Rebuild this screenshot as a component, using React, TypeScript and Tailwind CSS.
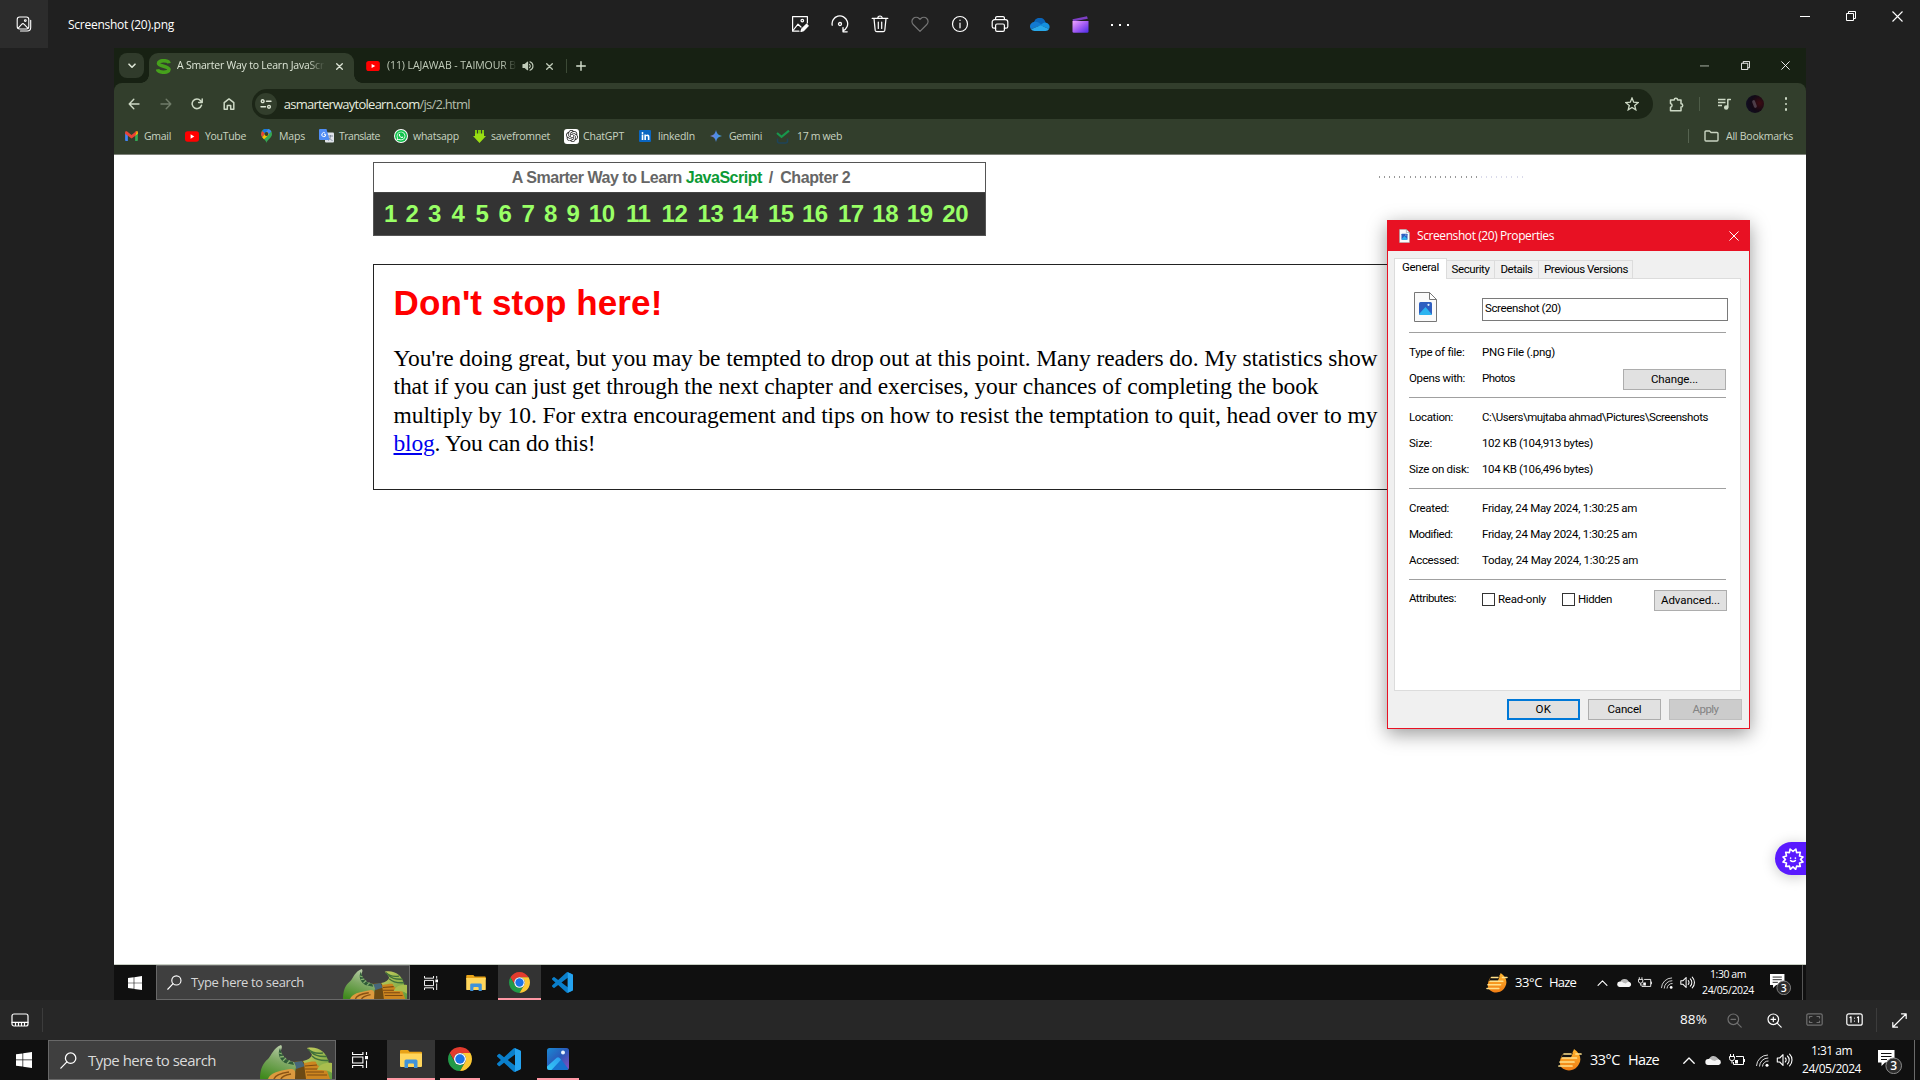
import React, { useLayoutEffect, useRef, useState } from "react";
import { SiOpenai } from "react-icons/si";
import { FaWhatsapp, FaLinkedinIn } from "react-icons/fa";

/* Spreads one line of text over the width of its box by adjusting tracking. */
function Fit({ className = "", children }: { className?: string; children: React.ReactNode }) {
  const box = useRef<HTMLSpanElement>(null);
  const inner = useRef<HTMLSpanElement>(null);
  const [tracking, setTracking] = useState(0);
  useLayoutEffect(() => {
    if (!box.current || !inner.current) return;
    const n = (inner.current.textContent || "").length;
    const natural = inner.current.getBoundingClientRect().width;
    setTracking((box.current.getBoundingClientRect().width - natural) / n);
  }, []);
  return (
    <span ref={box} className={"block shrink-0 whitespace-pre " + className}>
      <span ref={inner} style={{ letterSpacing: tracking + "px" }}>
        {children}
      </span>
    </span>
  );
}

type IconProps = { className?: string };
function Line({
  className = "size-5",
  box = "0 0 20 20",
  sw = 1.2,
  children,
}: IconProps & { box?: string; sw?: number; children: React.ReactNode }) {
  return (
    <svg
      viewBox={box}
      className={"shrink-0 " + className}
      fill="none"
      stroke="currentColor"
      strokeWidth={sw}
      strokeLinecap="round"
      strokeLinejoin="round"
    >
      {children}
    </svg>
  );
}

const Minimize = ({ className = "size-[10px]" }: IconProps) => (
  <Line className={className} box="0 0 10 10" sw={1}>
    <path d="M0 5.5h10" strokeLinecap="butt" />
  </Line>
);
const Restore = ({ className = "size-[10px]" }: IconProps) => (
  <svg viewBox="0 0 10 10" className={"shrink-0 " + className} fill="none" stroke="currentColor">
    <path d="M.5 2.5h7v7h-7zM2.5 2.5v-2h7v7h-2" />
  </svg>
);
const Close = ({ className = "size-[11px]" }: IconProps) => (
  <svg viewBox="0 0 11 11" className={"shrink-0 " + className} fill="none" stroke="currentColor" strokeWidth="1.1">
    <path d="M.5.5l10 10M10.5.5l-10 10" />
  </svg>
);

const YouTube = ({ className = "w-[15px] h-[11px]" }: IconProps) => (
  <svg viewBox="0 0 15 11" className={"shrink-0 " + className}>
    <rect width="15" height="11" rx="2.8" fill="#f00" />
    <path d="M6 3.2v4.6l4-2.3z" fill="#fff" />
  </svg>
);

/* ---------- Photos title bar ---------- */

function PhotosTitleBar() {
  return (
    <header className="flex h-12 shrink-0 bg-[#202020] text-white">
      <div className="flex w-12 items-center justify-center bg-[#2c2c2c]">
        <Line className="size-4" box="0 0 16 16" sw={1.1}>
          <rect x="1.2" y="1" width="11.6" height="12" rx="2.4" />
          <path d="M4.5 15h6.8a3.4 3.4 0 0 0 3.4-3.4V4.2M2.2 12.2l3.7-4.1a1.4 1.4 0 0 1 2.1 0l3.8 4.1" />
          <circle cx="9.3" cy="4.6" r=".9" />
        </Line>
      </div>
      <div className="flex w-[732px] items-center pt-px pl-[20px] text-[12px]">
        <Fit className="w-[106px]">Screenshot (20).png</Fit>
      </div>
      <div className="flex [&>div]:flex [&>div]:w-10 [&>div]:items-center [&>div]:justify-center">
        <div>
          <Line className="size-[18px]" box="0 0 18 18">
            <path d="M8 16.2H1.6V1.6h14.8V8" />
            <path d="M2 15.5l5-6.3 3 2.8" />
            <circle cx="11.3" cy="5.6" r="1.3" />
            <path d="M15.6 9.2l1.6 1.6-4.6 4.8-2.6.9.8-2.6z" fill="currentColor" />
          </Line>
        </div>
        <div>
          <Line className="size-[18px]" box="0 0 18 18" sw={1.3}>
            <path d="M1.2 10.2A7.8 7.8 0 1 1 12 15.9M12 12.6v4.2h4.2" />
            <circle cx="9" cy="9" r="1.5" />
          </Line>
        </div>
        <div>
          <Line className="size-[18px]" box="0 0 18 18">
            <path d="M1.2 3.4h15.6M6.8 3.2a2.2 2.2 0 0 1 4.4 0M3 3.6l1.2 11.8a1.6 1.6 0 0 0 1.6 1.3h6.4a1.6 1.6 0 0 0 1.6-1.3L15 3.6M7.3 7v6.4M10.7 7v6.4" />
          </Line>
        </div>
        <div className="text-[#757575]">
          <Line className="size-[18px]" box="0 0 18 18">
            <path d="M9 16.3L2.2 9.5a4.2 4.2 0 0 1 0-6 4.1 4.1 0 0 1 5.9 0l.9.9.9-.9a4.1 4.1 0 0 1 5.9 0 4.2 4.2 0 0 1 0 6z" />
          </Line>
        </div>
        <div>
          <Line className="size-[18px]" box="0 0 18 18">
            <circle cx="9" cy="9" r="7.5" />
            <path d="M9 8v4.8M9 5.2v.3" />
          </Line>
        </div>
        <div>
          <Line className="size-[18px]" box="0 0 18 18">
            <path d="M4.6 13.2H3a1.8 1.8 0 0 1-1.8-1.8V7A2.4 2.4 0 0 1 3.6 4.6h10.8A2.4 2.4 0 0 1 16.8 7v4.4a1.8 1.8 0 0 1-1.8 1.8h-1.6M4.6 4.4V3a1.4 1.4 0 0 1 1.4-1.4h6A1.4 1.4 0 0 1 13.4 3v1.4" />
            <rect x="4.6" y="9" width="8.8" height="7.3" rx="1.4" />
          </Line>
        </div>
        <div>
          <svg viewBox="0 0 20 13" className="mt-px h-[13px] w-5">
            <path d="M4 4A6 6 0 0 1 15.5 4.2 5 5 0 0 1 13 9L3 6z" fill="#0a64b8" />
            <path d="M4.7 3.8A4.6 4.6 0 0 0 1 11.2L12 6.8 8 4.2a5 5 0 0 0-3.300-.4z" fill="#1279d0" />
            <path d="M15.500 4.600A4.300 4.300 0 0 1 19 11L10.500 7.300l2-1.800a4.500 4.500 0 0 1 3-.9z" fill="#1490df" />
            <path d="M1 11.200A4.500 4.500 0 0 0 4.700 13h10.900a4.200 4.200 0 0 0 3.500-2.100L10.600 7.200z" fill="#28a8ea" />
          </svg>
        </div>
        <div>
          <svg viewBox="0 0 17 17" className="size-[17px]">
            <defs>
              <linearGradient id="clip" x1="0" y1="0" x2="1" y2="1">
                <stop offset="0" stopColor="#f0a6ff" />
                <stop offset=".5" stopColor="#a45cf5" />
                <stop offset="1" stopColor="#4a2be8" />
              </linearGradient>
            </defs>
            <path d="M.5 3.3L15 .2l.8 2.600L1 5.600z" fill="#7d3fc4" />
            <path d="M.5 5h16v10.500a1.300 1.300 0 0 1-1.300 1.300H1.800A1.300 1.300 0 0 1 .5 15.500z" fill="url(#clip)" />
          </svg>
        </div>
        <div className="gap-[6px]">
          <i className="mt-0.5 size-[2px] bg-white" />
          <i className="mt-0.5 size-[2px] bg-white" />
          <i className="mt-0.5 size-[2px] bg-white" />
        </div>
      </div>
      <div className="ml-auto flex h-8 [&>div]:flex [&>div]:w-[46px] [&>div]:items-center [&>div]:justify-center">
        <div><Minimize /></div>
        <div><Restore /></div>
        <div><Close /></div>
      </div>
    </header>
  );
}

/* ---------- Browser ---------- */

function TabStrip() {
  return (
    <div className="flex h-[35px] bg-[#172113] text-[10.5px] text-[#dde5d6]">
      <div className="mt-[5px] ml-[5px] flex size-[25px] items-center justify-center rounded-[8px] bg-[#303b2b]">
        <Line className="h-[6px] w-[8px]" box="0 0 8 6" sw={1.6}>
          <path d="M1 1.200l3 3 3-3" />
        </Line>
      </div>
      <div className="relative mt-[5px] ml-[5px] flex w-[205px] items-center rounded-t-[9px] bg-[#323e2c] pb-[4px] pl-[7px]">
        <i className="absolute bottom-0 -left-2 size-2 bg-[radial-gradient(circle_at_0_0,transparent_7.5px,#323e2c_8px)]" />
        <i className="absolute -right-2 bottom-0 size-2 bg-[radial-gradient(circle_at_100%_0,transparent_7.5px,#323e2c_8px)]" />
        <svg viewBox="0 0 15 15" className="size-[15px] shrink-0" fill="none" stroke="#46a01c" strokeWidth="3.6">
          <path d="M13 4.200C12.500 1 2.500 .8 2.500 4.200c0 3.600 10.500 2.400 10.500 6.400 0 3.600-11 3.600-11.500-.4" />
        </svg>
        <div className="ml-[6px] w-[148px] [mask-image:linear-gradient(90deg,#000_88%,transparent)]">
          <Fit className="w-[147px]">A Smarter Way to Learn JavaScr</Fit>
        </div>
        <Line className="ml-[11px] size-[7px]" box="0 0 7 7" sw={1.3}>
          <path d="M.7.7l5.600 5.600M6.300.7L.7 6.300" />
        </Line>
      </div>
      <div className="flex items-center pt-px pl-[12px] text-[#c0cbb9]">
        <YouTube className="h-[10px] w-[14px]" />
        <div className="ml-[7px] w-[130px] [mask-image:linear-gradient(90deg,#000_88%,transparent)]">
          <Fit className="w-[129px]">(11) LAJAWAB - TAIMOUR B</Fit>
        </div>
        <Line className="ml-[5px] size-[12px]" box="0 0 12 12" sw={1.1}>
          <path d="M1 4.500h2l2.600-2.300v7.600L3 7.500H1z" fill="currentColor" />
          <path d="M7.500 4.300a2.300 2.300 0 0 1 0 3.400M8 1.700a4.600 4.600 0 0 1 0 8.600" />
        </Line>
        <Line className="ml-[12px] size-[7px]" box="0 0 7 7" sw={1.3}>
          <path d="M.7.7l5.600 5.600M6.300.7L.7 6.300" />
        </Line>
        <i className="ml-[13px] h-[14px] w-px bg-[#3c4a36]" />
        <Line className="ml-[9px] size-[10px] text-[#d5dfce]" box="0 0 10 10" sw={1.4}>
          <path d="M5 .7v8.600M.7 5h8.600" />
        </Line>
      </div>
      <div className="ml-auto flex items-center text-white [&>div]:flex [&>div]:w-[40.5px] [&>div]:justify-center">
        <div><Minimize className="size-[9px] text-[#b9c2b4]" /></div>
        <div><Restore className="size-[9px]" /></div>
        <div><Close className="size-[9px]" /></div>
      </div>
    </div>
  );
}

function AddressBar() {
  return (
    <div className="flex h-[42px] items-center text-[#cdd9c5]">
      <div className="ml-[4px] flex [&>div]:flex [&>div]:w-[31.7px] [&>div]:justify-center">
        <div>
          <Line className="size-[12px]" box="0 0 12 12" sw={1.4}><path d="M11 6H1.200M5.800 1.200L1.200 6l4.600 4.800" /></Line>
        </div>
        <div className="text-[#707c69]">
          <Line className="size-[12px]" box="0 0 12 12" sw={1.4}><path d="M1 6h9.800M6.200 1.200L10.800 6l-4.600 4.800" /></Line>
        </div>
        <div>
          <Line className="size-[12px]" box="0 0 12 12" sw={1.5}><path d="M10.500 7.300A4.800 4.800 0 1 1 9.600 2.700L11 4.200M11.200.9v3.500H7.700" /></Line>
        </div>
        <div>
          <Line className="size-[12px]" box="0 0 12 12" sw={1.5}><path d="M1.200 11.200V4.700L6 .9l4.800 3.800v6.500H7.700V7.500H4.300v3.700z" /></Line>
        </div>
      </div>
      <div className="ml-[7px] flex h-[30px] w-[1401px] items-center rounded-full bg-[#1c2617] pl-[3px]">
        <div className="flex size-[22px] items-center justify-center rounded-full bg-[#323e2c] text-[#dde7d6]">
          <Line className="size-[12px]" box="0 0 12 12" sw={1.4}>
            <circle cx="2.700" cy="3.200" r="1.400" />
            <path d="M6.500 3.200h4.500M1 8.800h4.500" />
            <circle cx="9" cy="8.800" r="1.400" />
          </Line>
        </div>
        <Fit className="ml-[7px] w-[186px] text-[13px] leading-none">
          <span className="text-[#e6ecdf]">asmarterwaytolearn.com</span>
          <span className="text-[#b3bead]">/js/2.html</span>
        </Fit>
        <Line className="mr-[14px] ml-auto size-[14px]" box="0 0 14 14" sw={1.3}>
          <path d="M7 1l1.700 4.200 4.500.3-3.500 2.900 1.100 4.400L7 10.400l-3.800 2.400 1.100-4.400L.8 5.500l4.500-.3z" strokeLinejoin="miter" />
        </Line>
      </div>
      <Line className="ml-[16px] size-[15px]" box="0 0 15 15" sw={1.5}>
        <path d="M1.500 3h3.700a1.700 1.700 0 0 1 3.400 0h3.400v3.700a1.700 1.700 0 0 1 0 3.400v3.700H1.500v-3.500a2 2 0 0 0 0-3.900z" />
      </Line>
      <i className="ml-[15px] h-[14px] w-px bg-[#4e5c48]" />
      <Line className="ml-[17px] size-[14px]" box="0 0 14 14" sw={1.5}>
        <path d="M1 2.500h7.500M1 5.500h7.500M1 8.500h4" strokeLinecap="butt" />
        <path d="M10.800 10V2.500h2.700" />
        <circle cx="9.200" cy="10.500" r="1.500" fill="currentColor" />
      </Line>
      <span className="ml-[15px] flex size-[18px] items-center justify-center rounded-full bg-[radial-gradient(circle_at_75%_45%,#3d0c12,#120a16_50%,#101028)]">
        <i className="h-[8px] w-[3px] rotate-[-20deg] rounded-full bg-[#77707c]/50" />
      </span>
      <span className="ml-[21px] flex flex-col gap-[3px]">
        <i className="size-[2.5px] rounded-full bg-current" />
        <i className="size-[2.5px] rounded-full bg-current" />
        <i className="size-[2.5px] rounded-full bg-current" />
      </span>
    </div>
  );
}

function Bookmarks() {
  return (
    <div className="flex h-[29px] items-center pb-[7px] text-[10.5px] leading-none text-[#c9d4c1]">
      <svg viewBox="0 0 14 11" className="ml-[11px] h-[10px] w-[13px] shrink-0">
        <path d="M0 1.500v8.700a.8.8 0 0 0 .8.8H3V4z" fill="#4285f4" />
        <path d="M14 1.500v8.700a.8.8 0 0 1-.8.8H11V4z" fill="#34a853" />
        <path d="M11 1l1.300-.8A1.200 1.200 0 0 1 14 1.500V3l-3 2.300z" fill="#fbbc04" />
        <path d="M0 1.500A1.200 1.200 0 0 1 1.900.4L7 4.300 12.100.4A1.200 1.200 0 0 1 13 .2L11 5.400 7 8.300 0 3z" fill="#ea4335" />
      </svg>
      <Fit className="ml-[6px] w-[27px]">Gmail</Fit>
      <YouTube className="ml-[14px] h-[11px] w-[14px]" />
      <Fit className="ml-[6px] w-[41px]">YouTube</Fit>
      <svg viewBox="0 0 11 14" className="ml-[15px] h-[14px] w-[11px] shrink-0">
        <path d="M5.500 14C5.200 10.500 0 9 0 5a5.500 5.500 0 0 1 11 0c0 4-5 5.500-5.500 9z" fill="#34a853" />
        <path d="M1.200 8.300A5.500 5.500 0 0 1 1.300 2L4 4.200z" fill="#ea4335" />
        <path d="M1.300 2A5.400 5.400 0 0 1 7.300 0L4 4.200z" fill="#1a73e8" />
        <path d="M7.300 0a5.400 5.400 0 0 1 3 2.500L6.500 6.500 4 4.200z" fill="#4285f4" />
        <path d="M1.200 8.300l5-5.800L8 5.500 3 10.300z" fill="#fbbc04" />
        <circle cx="5.500" cy="5" r="1.900" fill="#323e2c" />
      </svg>
      <Fit className="ml-[7px] w-[26px]">Maps</Fit>
      <svg viewBox="0 0 15 14" className="ml-[14px] h-[14px] w-[15px] shrink-0">
        <rect x="6" y="3.500" width="9" height="10" rx="1" fill="#dfe3ea" />
        <path d="M9 7h5M11.500 6v1c0 2-1 3.500-2.500 4.500M10 8.500c.8 1.500 2 2.500 3.500 3" stroke="#7a8698" strokeWidth=".9" fill="none" />
        <path d="M1 0h6.500L10.500 11H1a1 1 0 0 1-1-1V1a1 1 0 0 1 1-1z" fill="#4f8df5" />
        <path d="M6.200 4.200A2 2 0 1 0 6.800 5.700H5" stroke="#fff" strokeWidth="1" fill="none" />
      </svg>
      <Fit className="ml-[5px] w-[41px]">Translate</Fit>
      <span className="ml-[14px] flex size-[14px] items-center justify-center rounded-full bg-white">
        <span className="flex size-[12px] items-center justify-center rounded-full bg-[#10c34b] text-white">
          <FaWhatsapp className="size-[10px]" />
        </span>
      </span>
      <Fit className="ml-[5px] w-[46px]">whatsapp</Fit>
      <svg viewBox="0 0 13 13" className="ml-[14px] size-[13px] shrink-0">
        <path d="M2 0h2v4.500H2zM5 0h3v5H5zM9 0h2v4.500H9z" fill="#7fc80d" />
        <path d="M2 3.500h9V6h2L6.500 13 0 6h2z" fill="#9ade14" />
      </svg>
      <Fit className="ml-[5px] w-[59px]">savefromnet</Fit>
      <span className="ml-[14px] flex size-[15px] items-center justify-center rounded-[3px] bg-white text-[#222]">
        <SiOpenai className="size-[12px]" />
      </span>
      <Fit className="ml-[4px] w-[41px]">ChatGPT</Fit>
      <span className="ml-[15px] flex size-[12px] items-center justify-center rounded-[1px] bg-[#0a66c2] text-white">
        <FaLinkedinIn className="size-[9px]" />
      </span>
      <Fit className="ml-[7px] w-[37px]">linkedIn</Fit>
      <svg viewBox="0 0 13 13" className="ml-[15px] size-[12px] shrink-0">
        <defs>
          <linearGradient id="gem">
            <stop offset="0" stopColor="#8f7fc9" />
            <stop offset=".5" stopColor="#4b8be8" />
            <stop offset="1" stopColor="#4aa6d8" />
          </linearGradient>
        </defs>
        <path d="M6.500 0Q7.300 5.700 13 6.500 7.300 7.300 6.500 13 5.700 7.300 0 6.500 5.700 5.700 6.500 0z" fill="url(#gem)" />
      </svg>
      <Fit className="ml-[7px] w-[33px]">Gemini</Fit>
      <svg viewBox="0 0 14 14" className="ml-[14px] size-[14px] shrink-0 translate-y-px" fill="none">
        <path d="M1 3l4.500 3.800L13 .7" stroke="#18974c" strokeWidth="2.200" />
        <path d="M1.500 8.500V11a2 2 0 0 0 2 2h6a2 2 0 0 0 2-2V8.500" stroke="#1f4458" strokeWidth="1.600" />
      </svg>
      <Fit className="ml-[7px] w-[45px]">17 m web</Fit>
      <i className="ml-auto h-[14px] w-px bg-[#566350]" />
      <Line className="ml-[15px] h-[12px] w-[15px]" box="0 0 15 12" sw={1.4}>
        <path d="M1 10V2a1 1 0 0 1 1-1h3.500L7 2.500h6a1 1 0 0 1 1 1V10a1 1 0 0 1-1 1H2a1 1 0 0 1-1-1z" />
      </Line>
      <Fit className="mr-[13px] ml-[7px] w-[67px]">All Bookmarks</Fit>
    </div>
  );
}

/* Each chapter number with the width of its cell. */
const chapters: [number, number][] = [
  [1, 21.4], [2, 22.6], [3, 23.6], [4, 23.8], [5, 23], [6, 23], [7, 22.6], [8, 22.6], [9, 22.2], [10, 37.2],
  [11, 35.6], [12, 36], [13, 34.4], [14, 36], [15, 34], [16, 36], [17, 34.4], [18, 34.4], [19, 35.6], [20, 30],
];

function WebPage() {
  return (
    <main className="relative flex-1 bg-white pt-[7px] pl-[259px]">
      <div className="w-[613px] border border-[#555] font-['Liberation_Sans',sans-serif] font-bold">
        <div className="flex h-[29px] items-center justify-center pl-[3px] text-[16px] leading-none text-[#666]">
          <Fit className="w-[170px]">A Smarter Way to Learn</Fit>
          <Fit className="ml-[4px] w-[76px] text-[#0c9a35]">JavaScript</Fit>
          <span className="ml-[7px]">/</span>
          <Fit className="ml-[7px] w-[70px]">Chapter 2</Fit>
        </div>
        <nav className="flex h-[43px] items-center border-t border-[#444] bg-[#333] pl-[10px] text-[24px] leading-none text-[#99ff66]">
          {chapters.map(([n, w]) => (
            <span key={n} className="shrink-0 tracking-[-0.4px]" style={{ width: w }}>
              {n}
            </span>
          ))}
        </nav>
      </div>
      <article className="mt-[28px] h-[226px] w-[1085px] border border-[#222] pt-[21px] pl-[19.5px]">
        <h1 className="font-['Liberation_Sans',sans-serif] text-[35px] leading-[34px] font-bold text-[#f00]">
          <Fit className="w-[269px]">Don't stop here!</Fit>
        </h1>
        <p className="mt-[24px] font-['Liberation_Serif',serif] text-[23.5px] leading-[28.3px] text-black">
          <Fit className="w-[984px]">You're doing great, but you may be tempted to drop out at this point. Many readers do. My statistics show</Fit>
          <Fit className="w-[925px]">that if you can just get through the next chapter and exercises, your chances of completing the book</Fit>
          <Fit className="w-[984px]">multiply by 10. For extra encouragement and tips on how to resist the temptation to quit, head over to my</Fit>
          <Fit className="w-[202px]">
            <span className="text-[#0000ee] underline underline-offset-2">blog</span>. You can do this!
          </Fit>
        </p>
      </article>
      <div className="absolute top-[21px] left-[1265px] flex gap-[4.1px]">
        {Array.from({ length: 29 }, (_, i) => (
          <i key={i} className={i < 20 ? "h-[2px] w-px bg-[#999]" : "h-[2px] w-px bg-[#dadaea]"} />
        ))}
      </div>
      <div className="absolute top-[687px] right-0 flex h-[33px] w-[31px] items-center rounded-l-full bg-[#5a1aff] pl-[7px] text-white shadow-[0_2px_14px_rgba(0,0,0,0.22)] [clip-path:inset(-30px_0_-30px_-30px)]">
        <Line className="size-[22px]" box="0 0 22 22" sw={1.6}>
          <path d="M11 3.400l2.900-2.400.7 3.600 3.700-.3-.8 3.600 3.500 1.100-2.400 2.400 2.400 2.700-3.500 1 .8 3.400-3.700-.4-.9 3.200L11 18.800l-2.700 2.500-.9-3.200-3.700.4.8-3.400-3.500-1 2.400-2.700L1 9l3.500-1.100-.8-3.600 3.700.3.7-3.600z" />
          <path d="M8.600 10v.2M13.400 10v.2M8.600 12.600c1 1.200 3.800 1.200 4.800 0" />
        </Line>
      </div>
    </main>
  );
}

/* ---------- Taskbar pieces ---------- */

const WindowsLogo = ({ className = "" }: IconProps) => (
  <svg viewBox="0 0 16 16" className={"shrink-0 " + className} fill="#fff">
    <path d="M0 2.300l6.500-.9v6.200H0zM7.200 1.300L16 0v7.600H7.200zM0 8.300h6.500v6.300L0 13.700zM7.200 8.300H16V16l-8.800-1.200z" />
  </svg>
);
const SearchGlass = ({ className = "" }: IconProps) => (
  <Line className={className} box="0 0 16 16" sw={1.2}>
    <circle cx="10" cy="5.800" r="4.900" />
    <path d="M6.500 9.300L.8 15.200" />
  </Line>
);
const TaskView = ({ className = "" }: IconProps) => (
  <svg viewBox="0 0 16 16" className={"shrink-0 " + className} fill="none" stroke="#fff" strokeWidth="1.1">
    <path d="M.6 0v2.500h10.300V0M.6 16v-2.500h10.300V16M.6 5h10.300v6H.6zM14.500 0v3M14.500 8.500V16" />
    <path d="M13 4h3v3.200h-3z" fill="#fff" stroke="none" />
  </svg>
);
const Explorer = ({ className = "" }: IconProps) => (
  <svg viewBox="0 0 22 18" className={"shrink-0 " + className}>
    <path d="M0 1a1 1 0 0 1 1-1h7l1.500 1.800H21a1 1 0 0 1 1 1V5H0z" fill="#e8a317" />
    <path d="M0 3.500h22V16a1 1 0 0 1-1 1H1a1 1 0 0 1-1-1z" fill="#ffd65c" />
    <path d="M4.500 17.900V11a1.500 1.500 0 0 1 1.500-1.500h10a1.500 1.500 0 0 1 1.500 1.500v6.900H14V14.500a1 1 0 0 0-1-1H9a1 1 0 0 0-1 1v3.400z" fill="#3f92d9" />
  </svg>
);
const Chrome = ({ className = "" }: IconProps) => (
  <svg viewBox="0 0 48 48" className={"shrink-0 " + className}>
    <path d="M3.220 12L13.600 30A12 12 0 0 1 24 12H44.780A24 24 0 0 0 3.220 12z" fill="#e33b2e" />
    <path d="M3.220 12L13.600 30A12 12 0 0 0 34.400 30L24 48A24 24 0 0 1 3.220 12z" fill="#229a48" />
    <path d="M44.780 12H24A12 12 0 0 1 34.400 30L24 48A24 24 0 0 0 44.780 12z" fill="#fcc934" />
    <circle cx="24" cy="24" r="12" fill="#fff" />
    <circle cx="24" cy="24" r="9.500" fill="#1a73e8" />
  </svg>
);
const VSCode = ({ className = "" }: IconProps) => (
  <svg viewBox="0 0 24 24" className={"shrink-0 " + className}>
    <path
      fill="#0a7fcb"
      d="M23.150 2.587L18.210.21a1.494 1.494 0 0 0-1.705.29l-9.460 8.630-4.120-3.128a.999.999 0 0 0-1.276.057L.327 7.261A1 1 0 0 0 .326 8.740L3.899 12 .326 15.260a1 1 0 0 0 .001 1.479L1.650 17.940a.999.999 0 0 0 1.276.057l4.120-3.128 9.460 8.630a1.492 1.492 0 0 0 1.704.29l4.942-2.377A1.500 1.500 0 0 0 24 20.060V3.939a1.500 1.500 0 0 0-.85-1.352zm-5.146 14.861L10.826 12l7.178-5.448v10.896z"
    />
    <path d="M18 .2l5.150 2.390A1.500 1.500 0 0 1 24 3.940v16.120a1.500 1.500 0 0 1-.85 1.350L18 23.800z" fill="#25a3f0" />
  </svg>
);
const PhotosLogo = ({ className = "" }: IconProps) => (
  <svg viewBox="0 0 22 22" className={"shrink-0 " + className}>
    <defs>
      <linearGradient id="pl" x1="0" y1="0" x2="1" y2="1">
        <stop offset="0" stopColor="#1a8ad4" />
        <stop offset=".5" stopColor="#2a58b8" />
        <stop offset="1" stopColor="#8a4fc0" />
      </linearGradient>
      <linearGradient id="pm" x1="0" y1="1" x2="1" y2="0">
        <stop offset="0" stopColor="#35c8f5" />
        <stop offset="1" stopColor="#2b9df0" />
      </linearGradient>
    </defs>
    <rect width="22" height="22" rx="2.500" fill="url(#pl)" />
    <path d="M1 21L11.200 10.300a1.500 1.500 0 0 1 2 0L21.400 21a2 2 0 0 1-1.500 1H2.500A2.500 2.500 0 0 1 1 21z" fill="#1672cf" />
    <path d="M0 18.500L9.700 9.800a2 2 0 0 1 2.600 0l1.700 2L4.500 22h-2A2.500 2.500 0 0 1 0 19.500z" fill="url(#pm)" />
    <circle cx="16" cy="4.500" r="2" fill="#eaf6ff" />
  </svg>
);
/* Two green creatures meeting over golden shells. */
const Critters = ({ className = "" }: IconProps) => (
  <svg viewBox="0 0 72 34" preserveAspectRatio="none" className={"shrink-0 " + className}>
    <defs>
      <linearGradient id="tg" x1=".6" y1="0" x2=".2" y2="1">
        <stop offset="0" stopColor="#b9cda8" />
        <stop offset=".45" stopColor="#7da862" />
        <stop offset="1" stopColor="#3f8a1c" />
      </linearGradient>
      <linearGradient id="tr" x1="0" y1="0" x2="1" y2="1">
        <stop offset="0" stopColor="#ccd05e" />
        <stop offset="1" stopColor="#5d9a3f" />
      </linearGradient>
    </defs>
    <path d="M30 18l6-2h10l2 18H30z" fill="#6b4a14" />
    <path d="M34 17l8-1 3 5-9 3z" fill="#46667a" />
    <path d="M0 34C0 24 3 18 8 14 12 10 13 3 21 0c2 2 0 4 0 6 1 6 6 10 13 11l2 5-2 12z" fill="url(#tg)" />
    <path d="M20 3c-3 6 0 12 5 15l9 2-1-3c-7-1-11-6-13-14z" fill="#2f5c38" />
    <path d="M19 8l3 1M20 12l4-.5M23 16l3-3M27 18.500l3-3" stroke="#86b070" strokeWidth="1.3" />
    <path d="M43 16c5-1 8-3 9-6-1-3-3-5-5-7 10-2 20 3 22 16l3 9v6H54z" fill="url(#tr)" />
    <path d="M48 4c4 4 9 5 15 4M51 7c4 4 9 5 16 4.500M52 11c4 4 10 5 17 4.500" stroke="#40703a" strokeWidth="1.5" fill="none" />
    <path d="M8 34c2-6 10-8 22-10 7-1 5 5 5 10z" fill="#dc9a3e" />
    <path d="M14 34c1-4 8-6 15-7M21 34c1-3 5-4 10-5" stroke="#8a5213" strokeWidth="1.6" fill="none" />
    <path d="M44 18c6-1 10-2 12-1 1 4 5 6 10 6l4 11H46z" fill="#cc8620" />
    <path d="M45 21l12-1M45 24l15 0M46 27h18M47 30h20" stroke="#7d4a10" strokeWidth="1.2" />
    <path d="M57 25c2-6 9-8 15-7v10c-4-3-9-3-15-3z" fill="#a8bd4e" />
  </svg>
);
const Haze = ({ className = "" }: IconProps) => (
  <svg viewBox="0 0 24 22" className={"shrink-0 " + className}>
    <defs>
      <linearGradient id="hz" x1="0" y1="0" x2="0" y2="1">
        <stop offset="0" stopColor="#ffb52e" />
        <stop offset="1" stopColor="#f07d14" />
      </linearGradient>
    </defs>
    <path d="M16 0c6 4 8 10 5 15a11 11 0 0 1-18 3C1 15 2 8 5 5c5 1 10 0 11-5z" fill="url(#hz)" />
    <path d="M6 3.500h9l-2 5H3z" fill="#101010" />
    <path d="M6 5h7M18 5h5M4.500 9h14M2 13h14M1 17h13" stroke="#ffe08a" strokeWidth="1.7" strokeLinecap="round" />
  </svg>
);
const Chevron = ({ className = "" }: IconProps) => (
  <Line className={className} box="0 0 12 7" sw={1.3}><path d="M.8 6.200L6 1l5.200 5.200" /></Line>
);
const Cloud = ({ className = "" }: IconProps) => (
  <svg viewBox="0 0 16 10" className={"shrink-0 " + className}>
    <path d="M3.500 4A5 5 0 0 1 12 3L15 6l-6 2z" fill="#b9b9b9" />
    <path d="M3 10a3 3 0 0 1-.3-6 4 4 0 0 1 4 1.200L9.500 6a4 4 0 0 1 3.500-1.500A2.800 2.800 0 0 1 13.200 10z" fill="#f6f6f6" />
  </svg>
);
const Battery = ({ className = "" }: IconProps) => (
  <svg viewBox="0 0 16 12" className={"shrink-0 " + className} fill="none" stroke="#fff" strokeWidth="1">
    <path d="M7 2.500h7.500v8h-10V8M15.500 5v3M1.500 0v2M4.500 0v2M.5 2.500h5v1.800a2.500 2.500 0 0 1-5 0zM3 7v2.500" />
    <path d="M6 6h3v3.500H6z" fill="#fff" stroke="none" />
  </svg>
);
const Wifi = ({ className = "" }: IconProps) => (
  <svg viewBox="0 0 13 13" className={"shrink-0 " + className} fill="none" stroke="#ddd" strokeWidth="1">
    <path d="M.5 12A11.500 11.500 0 0 1 12 1M3.500 12.500A8.700 8.700 0 0 1 12.300 4M6.500 12.500a5.800 5.800 0 0 1 6-5.500" />
    <circle cx="11" cy="11.300" r="1.500" fill="#fff" stroke="none" />
  </svg>
);
const Volume = ({ className = "" }: IconProps) => (
  <Line className={className} box="0 0 16 14" sw={1.1}>
    <path d="M.8 5h2.400L6.500 1.600v10.800L3.200 9H.8zM8.800 5a2.800 2.800 0 0 1 0 4M11 3a5.600 5.600 0 0 1 0 8M13.100 1.200a8.200 8.200 0 0 1 0 11.600" />
  </Line>
);
function Notices({ className = "" }: IconProps) {
  return (
    <svg viewBox="0 0 24 24" className={"shrink-0 " + className}>
      <path d="M0 0h16.500v12.500H7L3.500 16v-3.500H0z" fill="#fff" />
      <path d="M3 3.500h10.500M3 6.500h10.500M3 9.500h6" stroke="#101010" />
      <circle cx="15.700" cy="15.800" r="7.800" fill="#2c2c2c" stroke="#8a8a8a" strokeWidth="1" />
      <text x="15.700" y="20" textAnchor="middle" fill="#fff" fontSize="12" fontWeight="600" fontFamily="Open Sans, sans-serif">
        3
      </text>
    </svg>
  );
}

/* Taskbar inside the viewed picture */
function InnerTaskbar() {
  return (
    <div className="flex h-9 shrink-0 items-stretch border-t border-[#c8cfc4] bg-[#101010] text-white">
      <div className="flex w-[42px] items-center justify-center"><WindowsLogo className="size-[14px]" /></div>
      <div className="flex w-[254px] items-center border border-[#686868] bg-[#3f3f3f] pl-[10px]">
        <SearchGlass className="size-[15px]" />
        <Fit className="ml-[9px] w-[113px] text-[13px] leading-none text-[#d6d6d6]">Type here to search</Fit>
        <Critters className="ml-[39px] h-[30px] w-[64px] self-end" />
      </div>
      <div className="flex w-[42px] items-center justify-center"><TaskView className="size-[14px]" /></div>
      <div className="flex w-[46px] items-center justify-center pl-px"><Explorer className="h-[16px] w-[20px]" /></div>
      <div className="flex w-[43px] items-center justify-center border-b-2 border-[#ff98a4] bg-[#333]"><Chrome className="mt-px size-[21px]" /></div>
      <div className="flex w-[43px] items-center justify-center"><VSCode className="size-[21px]" /></div>
      <div className="ml-auto flex items-center">
        <Haze className="h-[20px] w-[22px]" />
        <Fit className="ml-[7px] w-[27px] text-[13px] leading-none">33°C</Fit>
        <Fit className="ml-[7px] w-[27px] text-[13px] leading-none">Haze</Fit>
        <Chevron className="ml-[21px] h-[6px] w-[11px]" />
        <Cloud className="ml-[9px] h-[9px] w-[15px]" />
        <Battery className="ml-[6px] h-[11px] w-[14px]" />
        <Wifi className="ml-[9px] size-[12px]" />
        <Volume className="ml-[7px] h-[13px] w-[15px]" />
        <div className="ml-[7px] flex w-[52px] flex-col items-center gap-[5px] pb-px text-[10.5px] leading-[11px]">
          <Fit className="w-[36px]">1:30 am</Fit>
          <Fit className="w-[52px]">24/05/2024</Fit>
        </div>
        <Notices className="mt-[3px] ml-[16px] size-[21px]" />
        <i className="ml-[11px] h-[35px] w-px bg-[#555]" />
        <i className="w-[3px]" />
      </div>
    </div>
  );
}

function Taskbar() {
  return (
    <footer className="flex h-10 shrink-0 items-stretch bg-[#101010] text-white">
      <div className="flex w-12 items-center justify-center"><WindowsLogo className="size-[16px]" /></div>
      <div className="flex w-[288px] items-center border border-[#686868] bg-[#3f3f3f] pl-[11px]">
        <SearchGlass className="size-[17px]" />
        <Fit className="ml-[11px] w-[128px] text-[15px] leading-none text-[#dadada]">Type here to search</Fit>
        <Critters className="ml-[44px] h-[34px] w-[72px] self-end" />
      </div>
      <div className="flex w-[51px] items-center justify-center pr-[3px]"><TaskView className="size-[16px]" /></div>
      <div className="flex w-[48px] items-center justify-center border-b-2 border-[#ff98a4] bg-[#343434]"><Explorer className="h-[18px] w-[22px]" /></div>
      <div className="ml-[5px] flex w-[40px] items-center justify-center border-b-2 border-[#ff98a4]"><Chrome className="size-[24px]" /></div>
      <div className="flex w-[57px] items-center justify-center"><VSCode className="size-[24px]" /></div>
      <div className="flex w-[42px] items-center justify-center border-b-2 border-[#ff98a4]"><PhotosLogo className="size-[22px]" /></div>
      <div className="ml-auto flex items-center">
        <Haze className="h-[22px] w-[24px]" />
        <Fit className="ml-[8px] w-[30px] text-[14.5px] leading-none">33°C</Fit>
        <Fit className="ml-[8px] w-[31px] text-[14.5px] leading-none">Haze</Fit>
        <Chevron className="ml-[24px] h-[7px] w-[12px]" />
        <Cloud className="ml-[10px] h-[10px] w-[17px]" />
        <Battery className="ml-[7px] h-[12px] w-[16px]" />
        <Wifi className="ml-[11px] size-[13px]" />
        <Volume className="ml-[7px] h-[14px] w-[17px]" />
        <div className="ml-[9px] flex w-[59px] flex-col items-center gap-[6px] pb-px text-[12px] leading-[12px]">
          <Fit className="w-[41px]">1:31 am</Fit>
          <Fit className="w-[59px]">24/05/2024</Fit>
        </div>
        <Notices className="mt-[4px] ml-[17px] size-[24px]" />
        <i className="ml-[12px] h-10 w-px bg-[#6a6a6a]" />
        <i className="w-[5px]" />
      </div>
    </footer>
  );
}

function PhotosStatusBar() {
  return (
    <div className="flex h-10 shrink-0 items-center bg-[#272727] text-white">
      <Line className="ml-[11px] h-[14px] w-[18px]" box="0 0 18 14">
        <rect x="1" y="1" width="16" height="12" rx="2" />
        <path d="M1 9.300h16M4.500 9.500v3M7.500 9.500v3M10.500 9.500v3M13.500 9.500v3" />
      </Line>
      <i className="ml-[13px] h-6 w-px bg-[#3c3c3c]" />
      <Fit className="ml-auto w-[27px] text-[13.5px] leading-none">88%</Fit>
      <div className="ml-[7px] flex [&>div]:flex [&>div]:w-10 [&>div]:justify-center">
        <div className="text-[#6f6f6f]">
          <Line className="size-[15px]" box="0 0 15 15"><circle cx="6.300" cy="6.300" r="5.300" /><path d="M10.200 10.200l4 4M4 6.300h4.600" /></Line>
        </div>
        <div>
          <Line className="size-[15px]" box="0 0 15 15"><circle cx="6.300" cy="6.300" r="5.300" /><path d="M10.200 10.200l4 4M4 6.300h4.600M6.300 4v4.600" /></Line>
        </div>
        <div className="text-[#6f6f6f]">
          <Line className="h-[13px] w-[17px]" box="0 0 17 13"><rect x=".8" y=".8" width="15.400" height="11.400" rx="1.500" /><path d="M3.500 5V3.500H6M11 3.500h2.500V5M3.500 8v1.500H6M11 9.500h2.500V8" /></Line>
        </div>
        <div>
          <Line className="h-[13px] w-[17px]" box="0 0 17 13"><rect x=".8" y=".8" width="15.400" height="11.400" rx="2" /><path d="M4 4.500l1-.7v5.400M11.500 4.500l1-.7v5.400M8.500 5v.1M8.500 8v.1" /></Line>
        </div>
      </div>
      <i className="ml-[2px] h-6 w-px bg-[#3c3c3c]" />
      <Line className="mr-[13px] ml-[15px] size-[15px]" box="0 0 15 15">
        <path d="M1 14L14 1M9.500.8h4.700v4.700M.8 9.500v4.700h4.700" />
      </Line>
    </div>
  );
}

/* ---------- Properties dialog ---------- */

const PngFile = ({ className = "" }: IconProps) => (
  <svg viewBox="0 0 23 30" className={"shrink-0 " + className}>
    <path d="M.5.5h15l7 7v22H.5z" fill="#fafafa" stroke="#777" />
    <path d="M15.500.5v7h7z" fill="#fff" stroke="#777" />
    <rect x="5" y="10" width="13" height="13" rx="1.500" fill="#2f5fc0" />
    <path d="M5 22l6.500-7 6.500 7.500-1 .5H6z" fill="#2cb4f0" />
    <circle cx="14.500" cy="12.800" r="1.100" fill="#e8f4ff" />
  </svg>
);

function Button({ className = "", w, children }: { className?: string; w: string; children: string }) {
  return (
    <div className={"flex h-[21px] shrink-0 items-center justify-center " + className}>
      <Fit className={w}>{children}</Fit>
    </div>
  );
}

function Field({ label, lw, value, vw, children }: { label: string; lw: string; value: string; vw: string; children?: React.ReactNode }) {
  return (
    <div className="flex h-[26px] items-center">
      <div className="w-[73px] shrink-0"><Fit className={lw}>{label}</Fit></div>
      <Fit className={vw}>{value}</Fit>
      {children}
    </div>
  );
}

const Rule = ({ className = "" }: IconProps) => <div className={"h-px w-[317px] shrink-0 bg-[#a0a0a0] " + className} />;

function PropertiesDialog() {
  return (
    <section className="absolute top-[220px] left-[1387px] flex h-[509px] w-[363px] flex-col border border-[#e81123] bg-[#f0f0f0] font-['Roboto',sans-serif] text-[11.5px] leading-none text-black shadow-[0_5px_18px_rgba(0,0,0,0.4)]">
      <div className="flex h-[30px] shrink-0 items-center bg-[#e81123] pl-[11px] font-['Open_Sans',sans-serif] text-[12px] text-white">
        <PngFile className="h-[14px] w-[11px]" />
        <Fit className="ml-[7px] w-[137px]">Screenshot (20) Properties</Fit>
        <Close className="mr-[10px] ml-auto size-[10px]" />
      </div>
      <div className="relative z-10 mt-[7px] ml-[6px] flex h-[20px] shrink-0 items-end">
        <div className="-mb-px flex h-[21px] w-[53px] items-center justify-center border border-b-0 border-[#dcdcdc] bg-white pb-[2px]"><Fit className="w-[37px]">General</Fit></div>
        <div className="flex h-[18px] w-[48px] items-center justify-center border-t border-r border-[#dcdcdc] pt-px"><Fit className="w-[38px]">Security</Fit></div>
        <div className="flex h-[18px] w-[44px] items-center justify-center border-t border-r border-[#dcdcdc] pt-px"><Fit className="w-[32px]">Details</Fit></div>
        <div className="flex h-[18px] w-[94px] items-center justify-center border-t border-r border-[#dcdcdc] pt-px pl-px"><Fit className="w-[84px]">Previous Versions</Fit></div>
      </div>
      <div className="ml-[6px] flex h-[413px] w-[347px] shrink-0 flex-col border border-[#dcdcdc] bg-white pl-[14px]">
        <div className="flex pt-[13px] pl-[5px]">
          <PngFile className="h-[30px] w-[23px]" />
          <div className="mt-[6px] ml-[45px] flex h-[23px] w-[246px] border border-[#7a7a7a] pt-[4px] pl-[2px]"><Fit className="w-[76px]">Screenshot (20)</Fit></div>
        </div>
        <Rule className="mt-[10px]" />
        <div className="mt-[7px]">
          <Field label="Type of file:" lw="w-[55px]" value="PNG File (.png)" vw="w-[73px]" />
          <Field label="Opens with:" lw="w-[56px]" value="Photos" vw="w-[33px]">
            <Button className="mt-px ml-[108px] w-[103px] border border-[#adadad] bg-[#e1e1e1]" w="w-[47px]">Change...</Button>
          </Field>
        </div>
        <Rule className="mt-[5px]" />
        <div className="mt-[7px]">
          <Field label="Location:" lw="w-[44px]" value="C:\Users\mujtaba ahmad\Pictures\Screenshots" vw="w-[226px]" />
          <Field label="Size:" lw="w-[23px]" value="102 KB (104,913 bytes)" vw="w-[111px]" />
          <Field label="Size on disk:" lw="w-[60px]" value="104 KB (106,496 bytes)" vw="w-[111px]" />
        </div>
        <Rule className="mt-[5px]" />
        <div className="mt-[7px]">
          <Field label="Created:" lw="w-[40px]" value="Friday, 24 May 2024, 1:30:25 am" vw="w-[155px]" />
          <Field label="Modified:" lw="w-[43px]" value="Friday, 24 May 2024, 1:30:25 am" vw="w-[155px]" />
          <Field label="Accessed:" lw="w-[50px]" value="Today, 24 May 2024, 1:30:25 am" vw="w-[156px]" />
        </div>
        <Rule className="mt-[5px]" />
        <div className="mt-[10px] flex h-[21px] items-center">
          <div className="w-[73px] pb-[3px]"><Fit className="w-[47px]">Attributes:</Fit></div>
          <i className="mb-[2px] size-[13px] border border-[#333]" />
          <Fit className="mb-[2px] ml-[3px] w-[48px]">Read-only</Fit>
          <i className="mb-[2px] ml-[16px] size-[13px] border border-[#333]" />
          <Fit className="mb-[2px] ml-[3px] w-[34px]">Hidden</Fit>
          <Button className="ml-[42px] w-[73px] border border-[#adadad] bg-[#e1e1e1]" w="w-[59px]">Advanced...</Button>
        </div>
      </div>
      <div className="mt-[8px] ml-[119px] flex gap-2">
        <Button className="w-[73px] border-2 border-[#0078d7] bg-[#e1e1e1]" w="w-[16px]">OK</Button>
        <Button className="w-[73px] border border-[#adadad] bg-[#e1e1e1] pt-px" w="w-[34px]">Cancel</Button>
        <Button className="w-[73px] border border-[#bfbfbf] bg-[#cccccc] pt-px text-[#838383]" w="w-[26px]">Apply</Button>
      </div>
    </section>
  );
}

export default function App() {
  return (
    <div className="relative flex h-[1080px] w-[1920px] flex-col overflow-hidden bg-[#202020] font-['Open_Sans',sans-serif]">
      <PhotosTitleBar />
      <div className="mx-auto flex h-[952px] w-[1692px] flex-col">
        <TabStrip />
        <div className="bg-[#172113]">
          <div className="h-[72px] rounded-t-[8px] border-b border-[#7d8179] bg-[#323e2c]">
            <AddressBar />
            <Bookmarks />
          </div>
        </div>
        <WebPage />
        <InnerTaskbar />
      </div>
      <PhotosStatusBar />
      <Taskbar />
      <PropertiesDialog />
    </div>
  );
}
